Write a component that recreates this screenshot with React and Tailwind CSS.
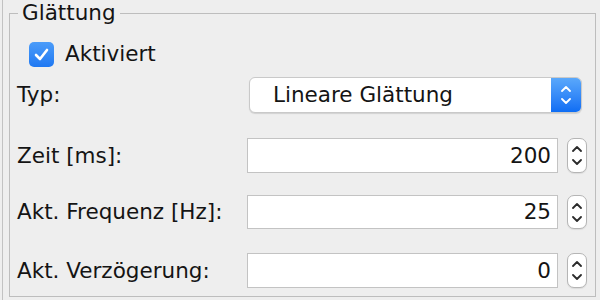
import React from "react";

const font = { fontFamily: '"DejaVu Sans", Verdana, sans-serif' };

const Chevrons = ({ color = "#2b2b2b", size = 10, gap = "gap-[5px]", stroke = 1.6 }) => (
  <div className={`flex flex-col items-center ${gap}`}>
    <svg width={size} height={6} viewBox="0 0 10 6">
      <path d="M1 5 L5 1 L9 5" fill="none" stroke={color} strokeWidth={stroke} strokeLinecap="round" strokeLinejoin="round" />
    </svg>
    <svg width={size} height={6} viewBox="0 0 10 6">
      <path d="M1 1 L5 5 L9 1" fill="none" stroke={color} strokeWidth={stroke} strokeLinecap="round" strokeLinejoin="round" />
    </svg>
  </div>
);

const NumberRow = ({ label, value, mt, h = "h-[35px]" }) => (
  <div className={`flex items-center ${mt}`}>
    <span className="w-[237px] pl-[7px] text-[#141414]">{label}</span>
    <div className={`w-[311px] ${h} bg-white border border-[#c3c3c3] flex items-center justify-end pr-[6px] text-[#141414]`}>
      {value}
    </div>
    <div className={`ml-[9px] w-[20px] ${h} bg-white border border-[#b5b5b5] rounded-[7px] flex items-center justify-center shadow-[0_1px_1px_rgba(0,0,0,0.08)]`}>
      <Chevrons size={10} gap="gap-[7px]" stroke={1.8} />
    </div>
  </div>
);

export default function App() {
  return (
    <div className="w-[600px] h-[300px] bg-[#eeeeee] flex overflow-hidden text-[21.5px] leading-none" style={font}>
      <div className="w-[2px]" />
      <div className="w-[1px] h-full bg-[#c2c2c2]" />
      <fieldset className="ml-[6px] w-[587px] h-[297px] border border-[#bdbdbd] p-0 m-0 min-w-0">
        <legend className="ml-[8px] px-[4px] h-[26px] leading-[26px] text-[#141414]">Glättung</legend>

        <div className="flex items-center h-[30px] mt-[13px] pl-[19px]">
          <div className="w-[25px] h-[25px] rounded-[5px] bg-gradient-to-b from-[#4b9cf9] to-[#1e78f2] flex items-center justify-center">
            <svg width="15" height="13" viewBox="0 0 15 13">
              <path d="M2 7 L6 11 L13 2" fill="none" stroke="white" strokeWidth="2.6" strokeLinecap="round" strokeLinejoin="round" />
            </svg>
          </div>
          <span className="ml-[11px] text-[#141414]">Aktiviert</span>
        </div>

        <div className="flex items-center mt-[8px]">
          <span className="w-[239px] pl-[7px] text-[#141414]">Typ:</span>
          <div className="w-[333px] h-[36px] bg-white rounded-[6px] border border-[#c9c9c9] shadow-[0_1px_1px_rgba(0,0,0,0.12)] flex items-stretch overflow-hidden">
            <div className="flex-1 flex items-center pl-[23px] text-[#141414]">Lineare Glättung</div>
            <div className="w-[30px] bg-gradient-to-b from-[#5aa8fb] to-[#0d6df4] flex items-center justify-center">
              <Chevrons color="white" size={12} gap="gap-[6px]" stroke={1.8} />
            </div>
          </div>
        </div>

        <NumberRow label="Zeit [ms]:" value="200" mt="mt-[25px]" />
        <NumberRow label="Akt. Frequenz [Hz]:" value="25" mt="mt-[22px]" h="h-[34px]" />
        <NumberRow label="Akt. Verzögerung:" value="0" mt="mt-[24px]" />
      </fieldset>
    </div>
  );
}
